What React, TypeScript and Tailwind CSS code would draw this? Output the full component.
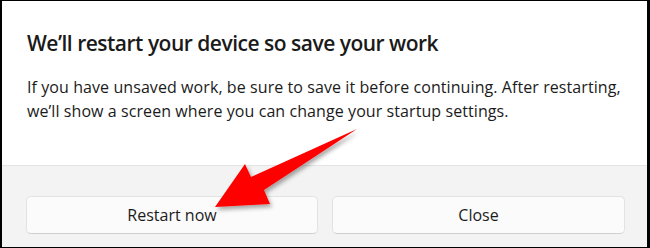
import React from 'react'

// Arrow callout drawn over the dialog
function RedArrow() {
  return (
    <svg
      className="pointer-events-none absolute inset-0"
      width="650"
      height="248"
      viewBox="0 0 650 248"
    >
      <defs>
        <filter id="arrowShadow" x="-20%" y="-20%" width="140%" height="140%">
          <feDropShadow dx="2" dy="3" stdDeviation="2" floodColor="#000" floodOpacity="0.35" />
        </filter>
      </defs>
      <polygon
        points="213,206 243,163 249,176 355,128 262,189 268,203"
        fill="#ff0000"
        filter="url(#arrowShadow)"
      />
    </svg>
  )
}

export default function App() {
  return (
    <div
      className="relative w-[650px] h-[248px] overflow-hidden border-black border-t border-b border-l-2 border-r-[3px] bg-white flex flex-col"
      style={{ fontFamily: '"Open Sans", "Noto Sans", sans-serif' }}
    >
      {/* Dialog content */}
      <div className="h-[164px] pl-[25px] pr-[20px] pt-[28px]">
        <h1 className="text-[21px] leading-[28px] font-semibold text-[#1a1a1a] tracking-[-0.5px]">
          We’ll restart your device so save your work
        </h1>
        <p className="mt-[18px] text-[16px] leading-[24px] text-[#1b1b1b] tracking-[0.08px]">
          If you have unsaved work, be sure to save it before continuing. After restarting,
          <br />
          we’ll show a screen where you can change your startup settings.
        </p>
      </div>

      {/* Footer with buttons */}
      <div className="flex-1 bg-[#f3f3f3] border-t border-[#e3e3e3] flex gap-[14px] pl-[24px] pr-[22px] pt-[30px]">
        <button className="w-[292px] h-[38px] rounded-[5px] bg-[#fbfbfb] border border-[#e2e2e2] border-b-[#cfcfcf] text-[16px] text-[#1b1b1b]">
          Restart now
        </button>
        <button className="w-[293px] h-[38px] rounded-[5px] bg-[#fbfbfb] border border-[#e2e2e2] border-b-[#cfcfcf] text-[16px] text-[#1b1b1b]">
          Close
        </button>
      </div>

      <RedArrow />
    </div>
  )
}
